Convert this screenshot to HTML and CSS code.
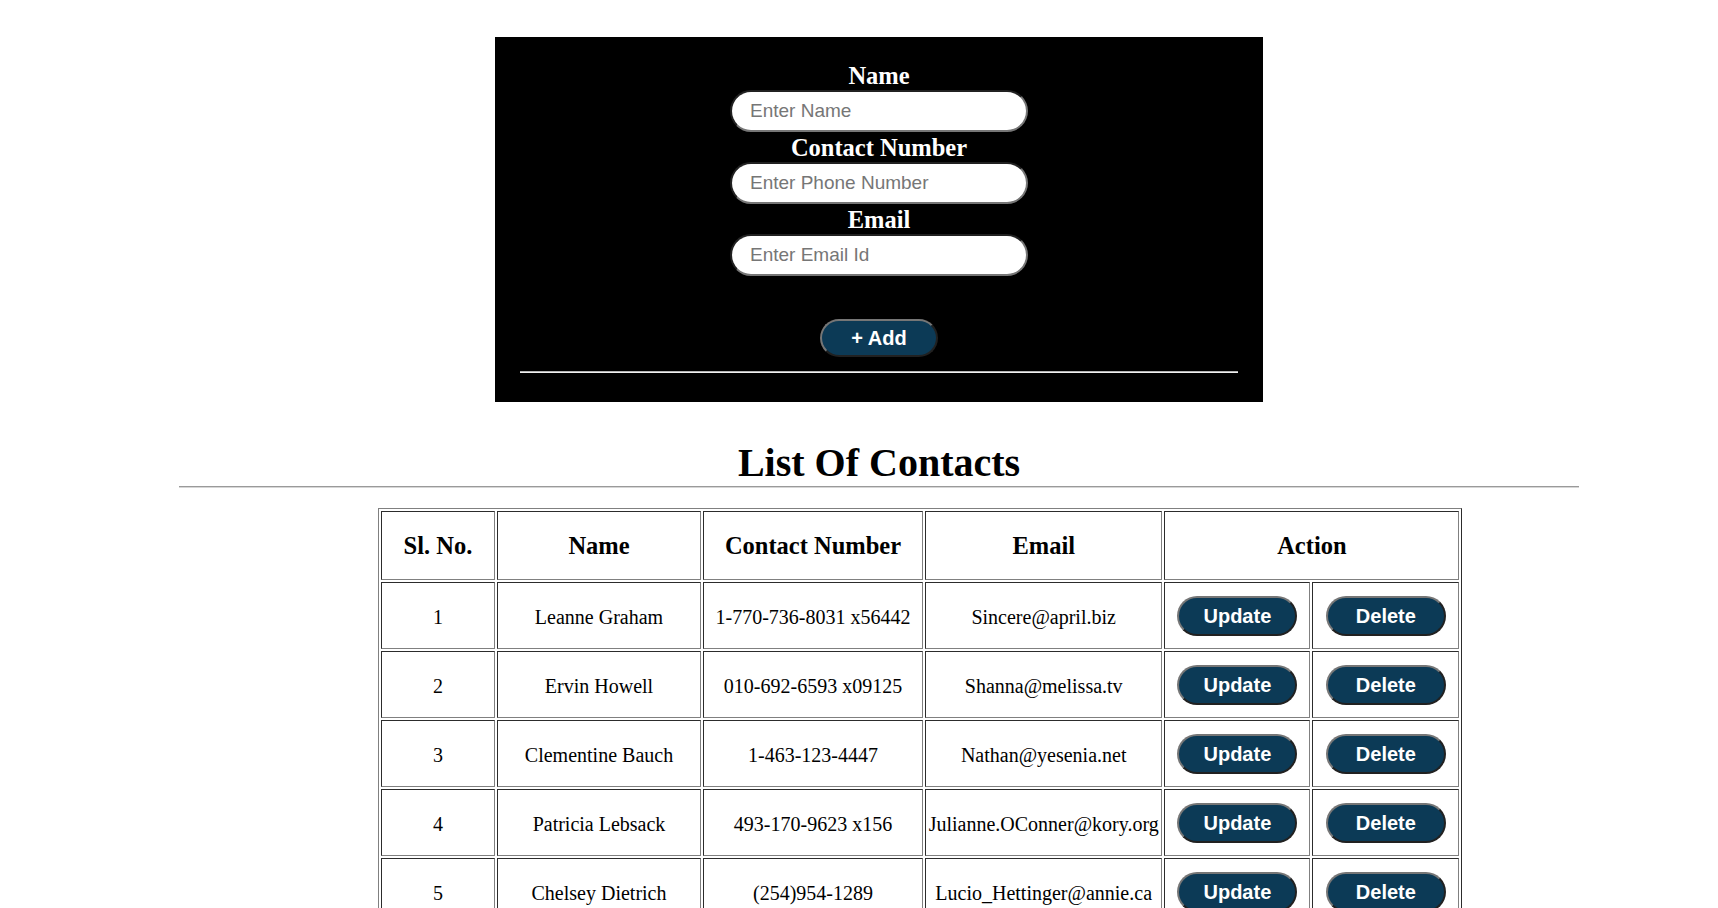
FILE: index.html
```html
<!DOCTYPE html>
<html lang="en">
<head>
<meta charset="utf-8">
<title>Contacts</title>
<link rel="stylesheet" href="styles.css">
</head>
<body>
<div class="page">
  <form class="entry">
    <label class="field-label" for="name">Name</label>
    <input id="name" class="field" type="text" placeholder="Enter Name">
    <label class="field-label" for="phone">Contact Number</label>
    <input id="phone" class="field" type="text" placeholder="Enter Phone Number">
    <label class="field-label" for="email">Email</label>
    <input id="email" class="field" type="text" placeholder="Enter Email Id">
    <button class="add-btn" type="button">+ Add</button>
    <hr class="entry-rule">
  </form>

  <h1 class="list-title">List Of Contacts</h1>
  <hr class="title-rule">

  <table class="contacts">
    <colgroup>
      <col class="c-sl">
      <col class="c-name">
      <col class="c-phone">
      <col class="c-email">
      <col class="c-upd">
      <col class="c-del">
    </colgroup>
    <thead>
      <tr>
        <th>Sl. No.</th>
        <th>Name</th>
        <th>Contact Number</th>
        <th>Email</th>
        <th colspan="2">Action</th>
      </tr>
    </thead>
    <tbody>
      <tr><td>1</td><td>Leanne Graham</td><td>1-770-736-8031 x56442</td><td>Sincere@april.biz</td><td class="act"><button class="row-btn" type="button">Update</button></td><td class="act"><button class="row-btn" type="button">Delete</button></td></tr>
      <tr><td>2</td><td>Ervin Howell</td><td>010-692-6593 x09125</td><td>Shanna@melissa.tv</td><td class="act"><button class="row-btn" type="button">Update</button></td><td class="act"><button class="row-btn" type="button">Delete</button></td></tr>
      <tr><td>3</td><td>Clementine Bauch</td><td>1-463-123-4447</td><td>Nathan@yesenia.net</td><td class="act"><button class="row-btn" type="button">Update</button></td><td class="act"><button class="row-btn" type="button">Delete</button></td></tr>
      <tr><td>4</td><td>Patricia Lebsack</td><td>493-170-9623 x156</td><td>Julianne.OConner@kory.org</td><td class="act"><button class="row-btn" type="button">Update</button></td><td class="act"><button class="row-btn" type="button">Delete</button></td></tr>
      <tr><td>5</td><td>Chelsey Dietrich</td><td>(254)954-1289</td><td>Lucio_Hettinger@annie.ca</td><td class="act"><button class="row-btn" type="button">Update</button></td><td class="act"><button class="row-btn" type="button">Delete</button></td></tr>
      <tr><td>6</td><td>Mrs. Dennis Schulist</td><td>1-477-935-8478 x6430</td><td>Karley_Dach@jasper.info</td><td class="act"><button class="row-btn" type="button">Update</button></td><td class="act"><button class="row-btn" type="button">Delete</button></td></tr>
      <tr><td>7</td><td>Kurtis Weissnat</td><td>210.067.6132</td><td>Telly.Hoeger@billy.biz</td><td class="act"><button class="row-btn" type="button">Update</button></td><td class="act"><button class="row-btn" type="button">Delete</button></td></tr>
      <tr><td>8</td><td>Nicholas Runolfsdottir V</td><td>586.493.6943 x140</td><td>Sherwood@rosamond.me</td><td class="act"><button class="row-btn" type="button">Update</button></td><td class="act"><button class="row-btn" type="button">Delete</button></td></tr>
      <tr><td>9</td><td>Glenna Reichert</td><td>(775)976-6794 x41206</td><td>Chaim_McDermott@dana.io</td><td class="act"><button class="row-btn" type="button">Update</button></td><td class="act"><button class="row-btn" type="button">Delete</button></td></tr>
      <tr><td>10</td><td>Clementina DuBuque</td><td>024-648-3804</td><td>Rey.Padberg@karina.biz</td><td class="act"><button class="row-btn" type="button">Update</button></td><td class="act"><button class="row-btn" type="button">Delete</button></td></tr>
    </tbody>
  </table>
</div>
</body>
</html>
```

FILE: styles.css
```css
body {
  margin: 8px;
  font-family: "Liberation Serif", "Times New Roman", serif;
  color: #000;
  background: #fff;
}

.page {
  width: 1400px;
  margin-left: 171px;
  padding-top: 29px;
}

/* ---------- entry form ---------- */
.entry {
  box-sizing: border-box;
  width: 768px;
  margin: 0 auto;
  background: #000;
  padding: 23px 25px 29px;
  display: flex;
  flex-direction: column;
  align-items: center;
}

.field-label {
  color: #fff;
  font-weight: bold;
  font-size: 24.5px;
  line-height: 28px;
  margin-top: 2px;
}

.field {
  box-sizing: border-box;
  width: 298px;
  height: 42px;
  margin: 0;
  padding: 0 18px;
  border: 2px inset #767676;
  border-radius: 21px;
  background: #fff;
  font-family: "Liberation Sans", Arial, sans-serif;
  font-size: 19px;
  color: #000;
  outline: none;
}

.field::placeholder {
  color: #767676;
}

.add-btn {
  box-sizing: border-box;
  margin-top: 43px;
  width: 118px;
  height: 38px;
  padding: 0;
  border: 2px outset #767676;
  border-radius: 19px;
  background: #0c3a56;
  color: #fff;
  font: bold 20px "Liberation Sans", Arial, sans-serif;
}

.entry-rule {
  align-self: stretch;
  margin: 14px 0 0;
  height: 0;
  border: 0;
  border-top: 1px solid #b4b4b4;
  border-bottom: 1px solid #f0f0f0;
}

/* ---------- list ---------- */
.list-title {
  margin: 38px 0 0;
  font-size: 40px;
  line-height: 46px;
  font-weight: bold;
  text-align: center;
}

.title-rule {
  margin: 0;
  height: 0;
  border: 0;
  border-top: 1px solid #9a9a9a;
  border-bottom: 1px solid #d6d6d6;
}

.contacts {
  margin: 20px 0 0 199px;
  border: 1px outset #808080;
  border-spacing: 2px;
}

.c-sl { width: 114px; }
.c-name { width: 204px; }
.c-phone { width: 220px; }
.c-email { width: 236px; }
.c-upd { width: 146px; }
.c-del { width: 147px; }

.contacts th,
.contacts td {
  border: 1px inset #808080;
  text-align: center;
  vertical-align: middle;
}

.contacts th {
  font-size: 24.5px;
  line-height: 28px;
  font-weight: bold;
  padding: 19.5px 20px;
}

.contacts td {
  font-size: 20px;
  padding: 4px 1px 0;
}

.contacts td.act {
  padding: 13px 12px 12px;
}

.row-btn {
  display: block;
  box-sizing: border-box;
  width: 120px;
  height: 40px;
  margin: 0 auto;
  padding: 0;
  border: 2px outset #767676;
  border-radius: 20px;
  background: #0c3a56;
  color: #fff;
  font: bold 20px "Liberation Sans", Arial, sans-serif;
}
```
